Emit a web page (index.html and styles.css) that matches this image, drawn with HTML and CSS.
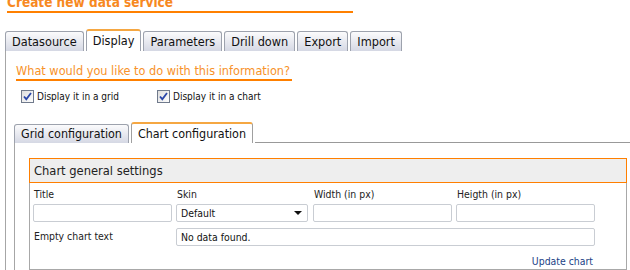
FILE: index.html
```html
<!DOCTYPE html>
<html>
<head>
<meta charset="utf-8">
<link rel="stylesheet" href="styles.css">
</head>
<body>
<div class="page">
  <h1 class="title">Create new data service</h1>
  <div class="tabbar">
    <div class="tab">Datasource</div>
    <div class="tab active">Display</div>
    <div class="tab">Parameters</div>
    <div class="tab">Drill down</div>
    <div class="tab">Export</div>
    <div class="tab">Import</div>
  </div>
  <div class="panel">
    <h2 class="question">What would you like to do with this information?</h2>
    <div class="checks">
      <label class="check">
        <svg class="cb" width="13" height="13" viewBox="0 0 13 13"><defs><linearGradient id="g1" x1="0" y1="0" x2="1" y2="1"><stop offset="0" stop-color="#dcdcdc"/><stop offset="1" stop-color="#ffffff"/></linearGradient></defs><rect x="0.5" y="0.5" width="12" height="12" fill="url(#g1)" stroke="#707a8c"/><path d="M3 6.5 L5.3 9.2 L10 3" fill="none" stroke="#2a46a8" stroke-width="1.8"/></svg>
        <span>Display it in a grid</span>
      </label>
      <label class="check">
        <svg class="cb" width="13" height="13" viewBox="0 0 13 13"><rect x="0.5" y="0.5" width="12" height="12" fill="url(#g1)" stroke="#707a8c"/><path d="M3 6.5 L5.3 9.2 L10 3" fill="none" stroke="#2a46a8" stroke-width="1.8"/></svg>
        <span>Display it in a chart</span>
      </label>
    </div>
    <div class="subtabbar">
      <div class="subtab">Grid configuration</div>
      <div class="subtab active">Chart configuration</div>
      <div class="subfill"></div>
    </div>
    <div class="subpanel">
      <div class="box">
        <div class="boxhead">Chart general settings</div>
        <div class="boxbody">
          <div class="grid">
            <div class="lbl">Title</div>
            <div class="lbl">Skin</div>
            <div class="lbl">Width (in px)</div>
            <div class="lbl">Heigth (in px)</div>
            <div class="inp w139"></div>
            <div class="inp sel"><span>Default</span><span class="arrow"></span></div>
            <div class="inp w139"></div>
            <div class="inp w139"></div>
            <div class="lbl2">Empty chart text</div>
            <div class="inp wide">No data found.</div>
          </div>
          <div class="actions"><a class="link">Update chart</a></div>
        </div>
      </div>
    </div>
  </div>
</div>
</body>
</html>
```
FILE: styles.css
```css
html, body { margin: 0; padding: 0; background: #fff; }
body { font-family: Tahoma, "DejaVu Sans Condensed", "DejaVu Sans", sans-serif; color: #222; overflow: hidden; }
.page { width: 630px; height: 270px; overflow: hidden; }
.title {
  margin: -7px 0 0 7px; width: 346px;
  font-size: 13.5px; font-weight: bold; line-height: 18px; color: #f7891f;
  border-bottom: 2px solid #ff8000; white-space: nowrap;
}
.tabbar { display: flex; align-items: flex-end; gap: 2px; margin: 16px 0 0 5px; }
.tab {
  height: 19px; line-height: 19px; padding: 0 6px;
  font-size: 12.6px; color: #111; white-space: nowrap;
  border: 1px solid #9da2ad; border-bottom: none; border-radius: 3px 3px 0 0;
  background: linear-gradient(#fbfbfc, #d5d8e4);
}
.tab.active { background: #fff; border-top: 2px solid #f5a742; height: 20px; line-height: 20px; }
.panel { margin-left: 5px; border-left: 1px solid #a6a6a6; height: 218px; padding-top: 12px; }
.question {
  margin: 0 0 0 10px; width: 276px; white-space: nowrap;
  font-size: 12.6px; font-weight: normal; line-height: 16px; color: #f7922a;
  border-bottom: 2px solid #ff8000;
}
.checks { display: flex; margin: 8px 0 0 15px; height: 14px; }
.check { display: flex; align-items: center; gap: 3px; font-size: 10px; color: #111; white-space: nowrap; }
.check:first-child { width: 136px; }
.cb { flex: none; }
.subtabbar { display: flex; align-items: flex-end; gap: 2px; margin: 19px 0 0 8px; }
.subtab {
  height: 18px; line-height: 18px; padding: 0 6px;
  font-size: 12.4px; color: #111; white-space: nowrap;
  border: 1px solid #9da2ad; border-bottom: none; border-radius: 3px 3px 0 0;
  background: linear-gradient(#fbfbfc, #d5d8e4);
}
.subtab.active { background: #fff; border: 1px solid #a0a0a0; border-top: 2px solid #f5a742; border-bottom: none; height: 19px; line-height: 20px; }
.subfill { flex: 1; border-bottom: 1px solid #999; }
.subpanel { margin-left: 8px; border-left: 1px solid #a6a6a6; height: 140px; padding: 15px 0 0 14px; }
.box { width: 598px; }
.boxhead {
  height: 23px; line-height: 23px; padding-left: 4px;
  font-size: 12.8px; color: #222;
  background: #eeeeee; border: 1px solid #ff7f00;
}
.boxbody { border: 1px solid #a8a8a8; border-top: none; height: 86px; padding: 0 0 0 3px; }
.grid { display: grid; grid-template-columns: 143px 137px 143px 143px; row-gap: 0; }
.lbl { font-size: 10.4px; line-height: 14px; padding: 4px 0 3px 1px; color: #222; }
.lbl2 { font-size: 10.4px; line-height: 17px; padding: 6px 0 0 1px; color: #222; }
.inp {
  height: 16px; border: 1px solid #c9cdd3; border-radius: 2px; background: #fff;
  font-size: 10.4px; line-height: 16px; padding: 0 4px; box-sizing: content-box; color: #111;
}
.w139 { width: 129px; }
.sel { width: 122px; display: flex; justify-content: space-between; align-items: center; }
.arrow { width: 0; height: 0; border-left: 4px solid transparent; border-right: 4px solid transparent; border-top: 4px solid #111; margin-right: 1px; }
.wide { grid-column: 2 / 5; width: 409px; margin-top: 6px; }
.actions { display: flex; justify-content: flex-end; padding: 8px 33px 0 0; }
.link { font-size: 10.4px; color: #1c3f86; line-height: 14px; }
```
